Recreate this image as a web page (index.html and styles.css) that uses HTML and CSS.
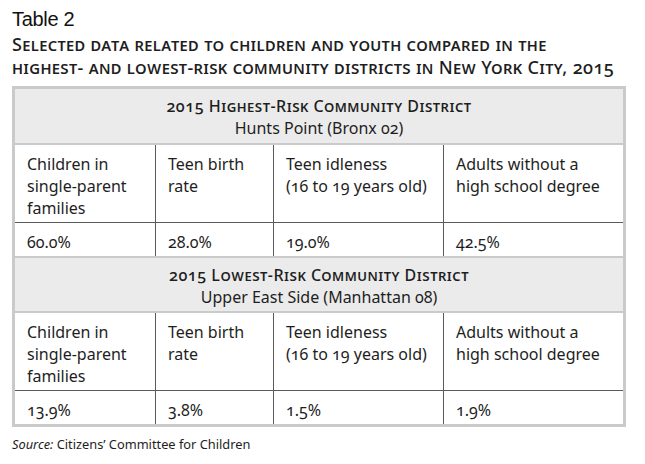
FILE: index.html
```html
<!DOCTYPE html>
<html>
<head>
<meta charset="utf-8">
<link rel="stylesheet" href="styles.css">
</head>
<body>
<div class="page">
  <h1 class="title">Table 2</h1>
  <p class="subtitle">Selected data related to children and youth compared in the<br>highest- and lowest-risk community districts in New York City, 2015</p>
  <table class="data">
    <colgroup>
      <col class="c1"><col class="c2"><col class="c3"><col class="c4">
    </colgroup>
    <tbody>
      <tr class="head first">
        <th colspan="4"><span class="sc">2015 Highest-Risk Community District</span><br>Hunts Point (Bronx 02)</th>
      </tr>
      <tr class="labels">
        <td>Children in<br>single-parent<br>families</td>
        <td>Teen birth<br>rate</td>
        <td>Teen idleness<br>(16 to 19 years old)</td>
        <td>Adults without a<br>high school degree</td>
      </tr>
      <tr class="values">
        <td>60.0%</td><td>28.0%</td><td>19.0%</td><td>42.5%</td>
      </tr>
      <tr class="head second">
        <th colspan="4"><span class="sc">2015 Lowest-Risk Community District</span><br>Upper East Side (Manhattan 08)</th>
      </tr>
      <tr class="labels">
        <td>Children in<br>single-parent<br>families</td>
        <td>Teen birth<br>rate</td>
        <td>Teen idleness<br>(16 to 19 years old)</td>
        <td>Adults without a<br>high school degree</td>
      </tr>
      <tr class="values">
        <td>13.9%</td><td>3.8%</td><td>1.5%</td><td>1.9%</td>
      </tr>
    </tbody>
  </table>
  <p class="source"><em>Source:</em> Citizens’ Committee for Children</p>
</div>
</body>
</html>
```
FILE: styles.css
```css
html, body {
  margin: 0;
  padding: 0;
  background: #ffffff;
}
.page {
  padding: 7px 12px 0 12px;
  color: #1e1e1e;
  font-family: "Noto Sans", "Open Sans", sans-serif;
  font-variant-numeric: oldstyle-nums;
}
.title {
  margin: 0;
  font-family: "Liberation Sans", Arial, sans-serif;
  font-weight: normal;
  font-size: 20px;
  line-height: 24px;
  letter-spacing: -0.3px;
  color: #111;
}
.subtitle {
  margin: 2px 0 0 0;
  font-size: 18px;
  line-height: 23px;
  font-variant-caps: small-caps;
  font-weight: 500;
  letter-spacing: 0.35px;
  color: #1e1e1e;
}
.data {
  margin-top: 7px;
  width: 614px;
  table-layout: fixed;
  border-collapse: separate;
  border-spacing: 0;
  border: 3px solid #cacaca;
  font-size: 16px;
  line-height: 22px;
}
.c1 { width: 140px; }
.c2 { width: 118px; }
.c3 { width: 170px; }
.c4 { width: 180px; }
.head th {
  background: #ebebeb;
  font-weight: normal;
  text-align: center;
  padding: 6px 0 4px 0;
  border-bottom: 2px solid #cacaca;
}
.head.second th {
  border-top: 2px solid #cacaca;
  padding: 6px 0 3px 0;
}
.sc {
  font-variant-caps: small-caps;
  font-weight: 500;
  letter-spacing: 0.5px;
}
.labels td, .values td {
  vertical-align: top;
  padding: 8px 8px 3px 12px;
  border-left: 1px solid #5a5a5a;
}
.labels td:first-child, .values td:first-child {
  border-left: 0;
}
.labels td {
  border-bottom: 1px solid #5a5a5a;
}
.source {
  margin: 8px 0 0 0;
  font-size: 12.8px;
  line-height: 18px;
}
```
